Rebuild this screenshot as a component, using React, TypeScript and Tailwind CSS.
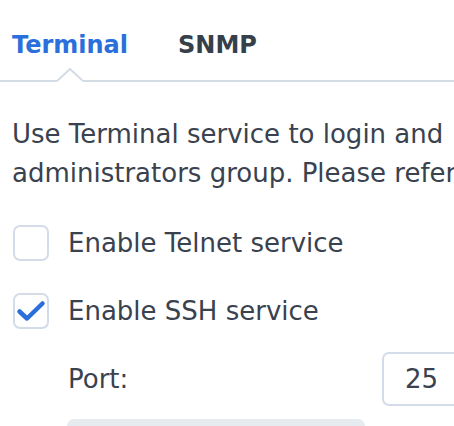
import React from "react";

function CheckRow({ label, checked }: { label: string; checked?: boolean }) {
  return (
    <div className="flex items-center gap-[19px] h-[36px]">
      <div className="w-[36px] h-[36px] shrink-0 rounded-[7px] border-2 border-[#d3dce8] bg-white flex items-center justify-center">
        {checked && (
          <svg width="30" height="22" viewBox="0 0 30 22" fill="none">
            <path d="M3.5 11.5 L11 18.5 L26.5 3.5" stroke="#2b6fdc" strokeWidth="4.5" strokeLinecap="round" strokeLinejoin="round" />
          </svg>
        )}
      </div>
      <span className="whitespace-nowrap">{label}</span>
    </div>
  );
}

export default function App() {
  return (
    <div className="w-[454px] h-[426px] overflow-hidden bg-white text-[#39424e] font-['DejaVu_Sans',sans-serif]">
      <div className="relative h-[82px] border-b-2 border-[#d3dbe5] flex items-start gap-[50px] px-[12px] pt-[30px] text-[24px] leading-[30px] font-bold">
        <span className="text-[#2a6fdb]">Terminal</span>
        <span className="text-[#36404b]">SNMP</span>
        <svg className="absolute left-[57px] top-[68px]" width="26" height="15" viewBox="0 0 26 15">
          <rect x="0" y="12" width="26" height="3" fill="white" />
          <path d="M0 13 L13 1 L26 13" fill="white" stroke="#d3dbe5" strokeWidth="2" />
        </svg>
      </div>
      <div className="px-[12px] pt-[33px] text-[26px] leading-[39px] whitespace-nowrap">
        <p>Use Terminal service to login and</p>
        <p>administrators group. Please refer</p>
      </div>
      <div className="px-[13px] pt-[32px] flex flex-col gap-[32px] text-[26px]">
        <CheckRow label="Enable Telnet service" />
        <CheckRow label="Enable SSH service" checked />
      </div>
      <div className="pl-[68px] pt-[23px] flex items-center text-[26px]">
        <span className="w-[314px] shrink-0">Port:</span>
        <div className="w-[100px] h-[54px] shrink-0 rounded-[7px] border-2 border-[#d3dce8] flex items-center pl-[21px]">25</div>
      </div>
      <div className="ml-[67px] mt-[13px] w-[298px] h-[20px] rounded-t-[7px] bg-[#e6ebf0]" />
    </div>
  );
}
